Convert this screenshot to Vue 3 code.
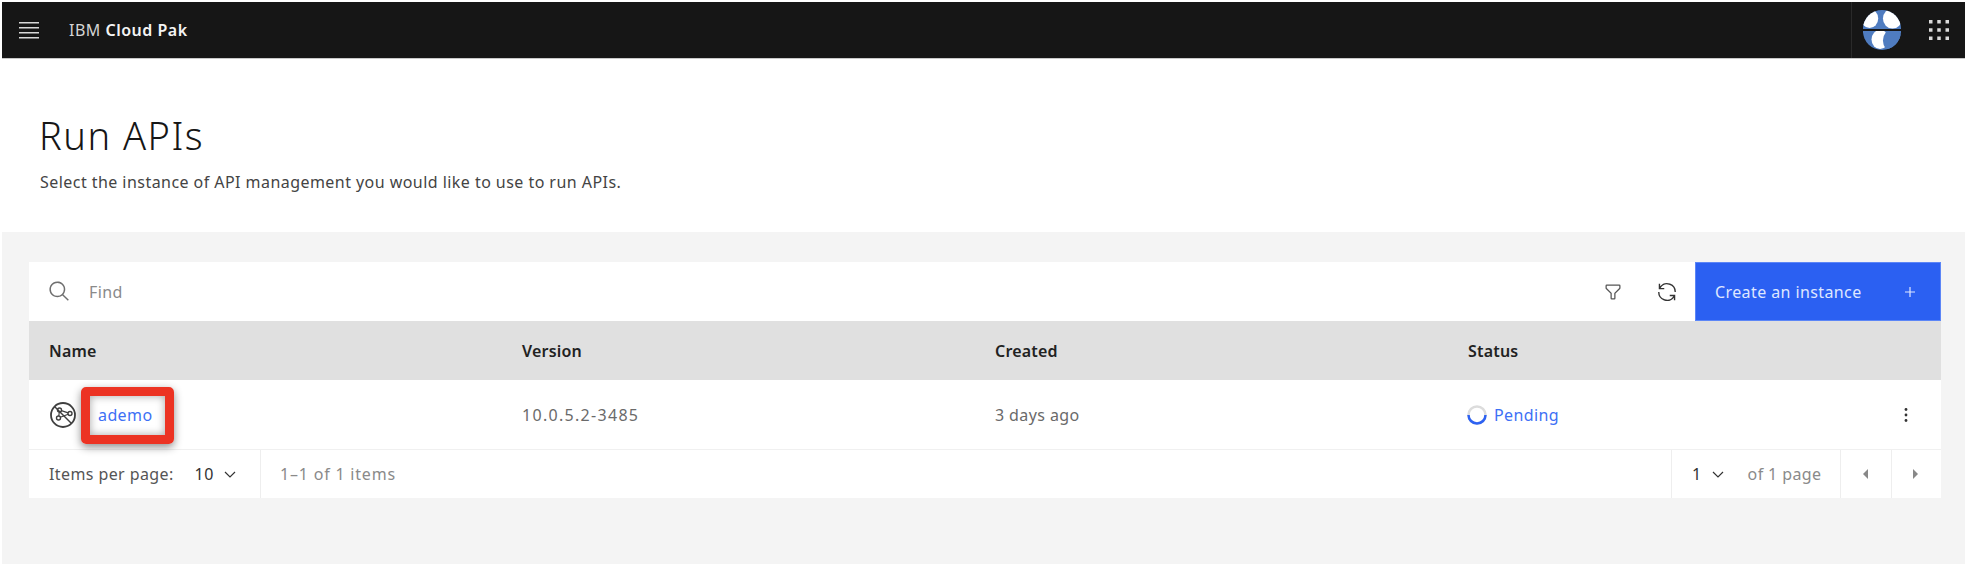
<template>
  <div class="page">
    <header class="topbar">
      <div class="menu-btn">
        <svg width="20" height="17" viewBox="0 0 20 17" fill="#d8d8d8">
          <rect y="0" width="20" height="1.5" />
          <rect y="5" width="20" height="1.5" />
          <rect y="10" width="20" height="1.5" />
          <rect y="15" width="20" height="1.5" />
        </svg>
      </div>
      <div class="brand">IBM <b>Cloud Pak</b></div>
      <div class="topbar-right">
        <div class="avatar">
          <svg width="40" height="40" viewBox="0 0 42 42">
            <defs>
              <clipPath id="top"><path d="M1 20A20 20 0 0 1 41 20Z" /></clipPath>
              <clipPath id="bot"><path d="M1 22A20 20 0 0 0 41 22Z" /></clipPath>
            </defs>
            <g clip-path="url(#top)">
              <rect width="42" height="21" fill="#4f7cc0" />
              <ellipse cx="8" cy="9" rx="9" ry="10" fill="#fff" />
              <ellipse cx="32" cy="9" rx="10" ry="10.500" fill="#fff" />
            </g>
            <g clip-path="url(#bot)">
              <rect y="21" width="42" height="21" fill="#4f7cc0" />
              <ellipse cx="19" cy="31" rx="9" ry="10" fill="#fff" />
              <ellipse cx="32" cy="32" rx="10" ry="12" fill="#4f7cc0" />
            </g>
          </svg>
        </div>
        <div class="switcher">
          <svg width="20" height="20" viewBox="0 0 20 20" fill="#dcdcdc">
            <template v-for="y in [0, 8.25, 16.5]" :key="y">
              <rect v-for="x in [0, 8.25, 16.5]" :key="x" :x="x" :y="y" width="3.5" height="3.5" />
            </template>
          </svg>
        </div>
      </div>
    </header>

    <section class="heading">
      <h1>Run APIs</h1>
      <p>Select the instance of API management you would like to use to run APIs.</p>
    </section>

    <main class="content">
      <div class="card">
        <div class="toolbar">
          <svg class="search-icon" width="23" height="23" viewBox="0 0 32 32" fill="#6f6f6f">
            <path d="M29 27.5859l-7.5521-7.5521a11.0177 11.0177 0 1 0-1.4141 1.4141L27.5859 29ZM4 13a9 9 0 1 1 9 9 9.01 9.01 0 0 1-9-9Z" />
          </svg>
          <span class="find">Find</span>
          <div class="tools">
            <svg width="20" height="20" viewBox="0 0 32 32" fill="#555">
              <path d="M18,28H14a2,2,0,0,1-2-2V18.41L4.59,11A2,2,0,0,1,4,9.59V6A2,2,0,0,1,6,4H26a2,2,0,0,1,2,2V9.59A2,2,0,0,1,27.41,11L20,18.41V26A2,2,0,0,1,18,28ZM6,6V9.59l8,8V26h4V17.59l8-8V6Z" />
            </svg>
            <svg width="22" height="22" viewBox="0 0 32 32" fill="#333">
              <path d="M12 10H6.78A11 11 0 0 1 27 16h2A13 13 0 0 0 6 7.68V4H4v8h8zM20 22h5.22A11 11 0 0 1 5 16H3a13 13 0 0 0 23 8.32V28h2v-8h-8z" />
            </svg>
          </div>
          <button class="create">
            <span>Create an instance</span>
            <svg width="12" height="12" viewBox="0 0 12 12" stroke="#dfe7ff" stroke-width="1.2">
              <path d="M6 1V11M1 6H11" />
            </svg>
          </button>
        </div>

        <div class="row head">
          <div v-for="col in columns" :key="col">{{ col }}</div>
        </div>

        <div class="row body">
          <div class="name-cell">
            <svg class="org" width="26" height="26" viewBox="0 0 26 26" fill="none" stroke="#3f3f3f" stroke-width="1.8">
              <circle cx="13" cy="13" r="12" />
              <path d="M4.5 4.5L21.5 21.5" stroke-width="1.5" />
              <circle cx="9.5" cy="8" r="2" stroke-width="1.4" />
              <circle cx="20" cy="11.5" r="2" stroke-width="1.4" />
              <circle cx="8.5" cy="16" r="2" stroke-width="1.4" />
              <path d="M11.4 8.6L18.1 10.9M9.3 10L8.8 14M10.3 15.3L18.2 12.2" stroke-width="1.2" />
            </svg>
            <a class="link">{{ instance.name }}</a>
            <div class="callout"></div>
          </div>
          <div class="version">{{ instance.version }}</div>
          <div>{{ instance.created }}</div>
          <div class="status">
            <svg width="20" height="20" viewBox="0 0 20 20" fill="none" stroke-width="2.5">
              <circle cx="10" cy="10" r="8.5" stroke="#dcdcdc" />
              <path d="M1.5 10A8.5 8.5 0 0 0 18.5 10" stroke="#2d62f2" />
            </svg>
            <a class="link">{{ instance.status }}</a>
          </div>
          <div class="overflow">
            <svg width="4" height="14" viewBox="0 0 4 14" fill="#333">
              <circle cx="2" cy="1.5" r="1.4" />
              <circle cx="2" cy="7" r="1.4" />
              <circle cx="2" cy="12.5" r="1.4" />
            </svg>
          </div>
        </div>

        <div class="pager">
          <div class="per-page">
            <span>Items per page:</span>
            <span class="value">10</span>
            <svg class="chev" width="12" height="7" viewBox="0 0 12 7" fill="none" stroke="#333" stroke-width="1.2">
              <path d="M1 1L6 6L11 1" />
            </svg>
          </div>
          <div class="range">1–1 of 1 items</div>
          <div class="page-select">
            <span class="value">1</span>
            <svg class="chev" width="12" height="7" viewBox="0 0 12 7" fill="none" stroke="#333" stroke-width="1.2">
              <path d="M1 1L6 6L11 1" />
            </svg>
            <span class="of">of 1 page</span>
          </div>
          <div class="arrow"><span class="tri left"></span></div>
          <div class="arrow"><span class="tri right"></span></div>
        </div>
      </div>
    </main>
  </div>
</template>

<script setup>
const columns = ['Name', 'Version', 'Created', 'Status']

const instance = {
  name: 'ademo',
  version: '10.0.5.2-3485',
  created: '3 days ago',
  status: 'Pending'
}
</script>

<style>
html, body {
  margin: 0;
  background: #fff;
}
</style>

<style scoped>
.page {
  height: 564px;
  box-sizing: border-box;
  padding: 2px 7px 0 2px;
  display: flex;
  flex-direction: column;
  font-family: "Noto Sans", "Open Sans", sans-serif;
  font-size: 16px;
  letter-spacing: 0.4px;
  color: #444;
  overflow: hidden;
}

.topbar {
  height: 56px;
  flex: none;
  background: #161616;
  border-bottom: 1px solid #c8c8c8;
  display: flex;
  align-items: center;
}

.menu-btn {
  width: 67px;
  padding-left: 17px;
  box-sizing: border-box;
  display: flex;
}

.brand {
  color: #d4d4d4;
  font-size: 16px;
  letter-spacing: 0.5px;
}

.brand b {
  color: #f4f4f4;
  font-weight: 600;
}

.topbar-right {
  margin-left: auto;
  display: flex;
  align-items: center;
  height: 100%;
}

.avatar {
  width: 62px;
  height: 100%;
  padding-right: 2px;
  border-left: 1px solid #2a2a2a;
  display: flex;
  align-items: center;
  justify-content: center;
  box-sizing: border-box;
}

.switcher {
  width: 52px;
  display: flex;
  justify-content: center;
}

.heading {
  height: 173px;
  flex: none;
  box-sizing: border-box;
  padding: 54px 0 0 37px;
}

.heading h1 {
  margin: 0;
  font-size: 38px;
  line-height: 44px;
  font-weight: 300;
  letter-spacing: 1.5px;
  color: #161616;
}

.heading p {
  margin: 14px 0 0 1px;
  line-height: 22px;
  letter-spacing: 0.45px;
  color: #444;
}

.content {
  flex: 1;
  background: #f4f4f4;
  padding: 30px 24px 0 27px;
}

.card {
  background: #fff;
}

.toolbar {
  height: 59px;
  display: flex;
  align-items: center;
  padding-left: 19px;
}

.search-icon {
  flex: none;
}

.find {
  margin-left: 18px;
  color: #8a8a8a;
}

.tools {
  margin-left: auto;
  display: flex;
  align-items: center;
  gap: 33px;
  margin-right: 17px;
}

.create {
  width: 246px;
  height: 59px;
  box-sizing: border-box;
  border: 1px solid #5c86f7;
  background: #2b60f2;
  color: #dfe7ff;
  font: inherit;
  letter-spacing: inherit;
  display: flex;
  align-items: center;
  justify-content: space-between;
  padding: 0 24px 0 19px;
}

.row {
  display: grid;
  grid-template-columns: 473px 473px 473px 1fr 70px;
  padding-left: 20px;
  align-items: center;
  box-sizing: border-box;
}

.head {
  grid-template-columns: 473px 473px 473px 1fr;
  height: 59px;
  background: #e0e0e0;
  color: #222;
  font-weight: 600;
  letter-spacing: 0.2px;
}

.body {
  height: 70px;
  color: #6a6a6a;
  border-bottom: 1px solid #f0f0f0;
}

.version {
  letter-spacing: 1.3px;
}

.name-cell {
  display: flex;
  align-items: center;
  gap: 22px;
  position: relative;
}

.org {
  margin-left: 1px;
}

.link {
  color: #3d70f5;
}

.callout {
  position: absolute;
  left: 32px;
  top: -15px;
  width: 93px;
  height: 57px;
  box-sizing: border-box;
  border: 9px solid #ec3323;
  border-radius: 5px;
  box-shadow: 0 3px 9px rgba(0, 0, 0, 0.45), inset 0 0 8px rgba(0, 0, 0, 0.35);
}

.status {
  display: flex;
  align-items: center;
  gap: 7px;
  margin-left: -1px;
}

.overflow {
  display: flex;
  justify-content: center;
}

.pager {
  height: 48px;
  display: flex;
  align-items: center;
  color: #8a8a8a;
}

.per-page {
  width: 232px;
  height: 100%;
  box-sizing: border-box;
  padding-left: 20px;
  display: flex;
  align-items: center;
  color: #555;
  border-right: 1px solid #eee;
}

.value {
  color: #333;
  margin-left: 21px;
}

.chev {
  margin-left: 10px;
}

.range {
  padding-left: 19px;
  letter-spacing: 0.8px;
}

.page-select {
  margin-left: auto;
  width: 170px;
  height: 100%;
  box-sizing: border-box;
  border-left: 1px solid #eee;
  border-right: 1px solid #eee;
  display: flex;
  align-items: center;
}

.page-select .value {
  margin-left: 20px;
}

.of {
  margin-left: 24px;
}

.arrow {
  width: 50px;
  height: 100%;
  padding-right: 2px;
  display: flex;
  align-items: center;
  justify-content: center;
  box-sizing: border-box;
}

.arrow + .arrow {
  border-left: 1px solid #eee;
}

.tri {
  width: 0;
  height: 0;
  border-top: 5px solid transparent;
  border-bottom: 5px solid transparent;
}

.tri.left {
  border-right: 5px solid #888;
}

.tri.right {
  border-left: 5px solid #888;
}
</style>
